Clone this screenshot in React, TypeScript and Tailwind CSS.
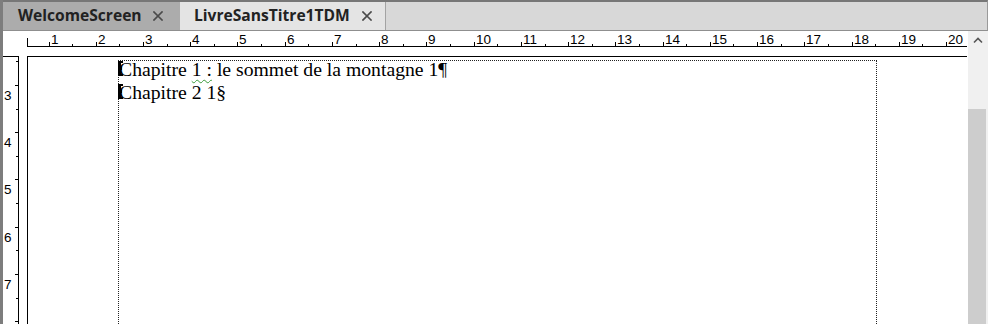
import React from "react";

const CM = 47.24;

function CloseX() {
  return (
    <svg width="10" height="10" viewBox="0 0 10 10" className="shrink-0">
      <path d="M1 1 L9 9 M9 1 L1 9" stroke="#4a4a4a" strokeWidth="1.7" strokeLinecap="square" />
    </svg>
  );
}

function HRuler() {
  const majors = Array.from({ length: 20 }, (_, i) => i + 1);
  return (
    <svg width="940" height="25" className="block">
      <line x1="0.5" y1="7" x2="0.5" y2="15.5" stroke="#000" strokeWidth="1" />
      <line x1="0" y1="15.5" x2="940" y2="15.5" stroke="#000" strokeWidth="1" />
      {majors.map((n) => {
        const x = Math.round(21.5 + CM * (n - 1)) + 0.5;
        const xm = Math.round(21.5 + CM * (n - 1) + CM / 2) + 0.5;
        return (
          <g key={n}>
            <line x1={x} y1="11" x2={x} y2="15" stroke="#000" strokeWidth="1" />
            {xm < 938 && <line x1={xm} y1="13" x2={xm} y2="15" stroke="#000" strokeWidth="1" />}
            <text
              x={x + 1.5}
              y="13"
              fontSize="13.5"
              fontFamily="'Liberation Sans', Arial, sans-serif"
              fill="#000"
            >
              {n}
            </text>
          </g>
        );
      })}
    </svg>
  );
}

function VRuler() {
  const majors = [3, 4, 5, 6, 7, 8];
  return (
    <svg width="16" height="268" className="block">
      <line x1="0" y1="0.5" x2="16" y2="0.5" stroke="#000" strokeWidth="1" />
      <line x1="15.5" y1="0" x2="15.5" y2="268" stroke="#000" strokeWidth="1" />
      <line x1="13" y1="5.5" x2="15" y2="5.5" stroke="#000" strokeWidth="1" />
      {majors.map((n, i) => {
        const y = Math.round(29 + CM * i) + 0.5;
        const ym = Math.round(29 + CM * i + CM / 2) + 0.5;
        return (
          <g key={n}>
            <line x1="12" y1={y} x2="15" y2={y} stroke="#000" strokeWidth="1" />
            <line x1="13" y1={ym} x2="15" y2={ym} stroke="#000" strokeWidth="1" />
            {n < 8 && (
              <text
                x="1"
                y={y + 14.5}
                fontSize="13.5"
                fontFamily="'Liberation Sans', Arial, sans-serif"
                fill="#000"
              >
                {n}
              </text>
            )}
          </g>
        );
      })}
    </svg>
  );
}

function Marker() {
  return (
    <svg width="5" height="15" viewBox="0 0 5 15" className="absolute -left-[1px] top-[3px]">
      <rect x="0" y="0" width="3" height="15" fill="#000" />
      <rect x="0" y="0" width="5" height="2" fill="#000" />
      <rect x="0" y="13" width="5" height="2" fill="#000" />
      <rect x="3" y="6" width="1" height="3" fill="#000" />
    </svg>
  );
}

export default function App() {
  return (
    <div className="w-[988px] h-[324px] overflow-hidden bg-white flex">
      <div className="w-[3px] h-full bg-[#7d7d7d] shrink-0" />
      <div className="flex-1 flex flex-col min-w-0">
        {/* Tab bar */}
        <div className="h-[31px] shrink-0 bg-[#d8d8d8] border-t-2 border-b border-r border-t-[#777777] border-b-[#8f8f8f] border-r-[#9a9a9a] flex items-stretch font-['Open_Sans',sans-serif]">
          <div className="w-[177px] bg-[#acacac] flex items-center pl-[15px] gap-[11px]">
            <span className="text-[15.6px] font-bold text-[#222]">WelcomeScreen</span>
            <CloseX />
          </div>
          <div className="w-[206px] bg-[#e4e4e4] border-r border-[#a3a3a3] flex items-center pl-[14px] gap-[12px]">
            <span className="text-[15.6px] font-bold text-[#222]">LivreSansTitre1TDM</span>
            <CloseX />
          </div>
        </div>
        {/* Body */}
        <div className="flex-1 flex min-h-0">
          <div className="flex-1 flex flex-col min-w-0">
            <div className="h-[25px] flex shrink-0">
              <div className="w-[24px] shrink-0" />
              <HRuler />
            </div>
            <div className="flex-1 flex min-h-0">
              <VRuler />
              <div className="w-[8px] shrink-0" />
              <div className="w-[940px] border-l border-t border-black pt-[3px] pl-[90px] overflow-hidden">
                <div className="w-[759px] h-[300px] border-l border-t border-r border-dotted border-[#222]">
                  <div className="-mt-[3px] font-['Liberation_Serif','Times_New_Roman',serif] text-[19.7px] leading-[23px] text-black">
                    <div className="relative">
                      <Marker />
                      Chapitre{" "}
                      <span className="underline decoration-wavy decoration-[#3a9a3a] decoration-1 underline-offset-[3px]">
                        1 :
                      </span>{" "}
                      le sommet de la montagne 1¶
                    </div>
                    <div className="relative">
                      <Marker />
                      Chapitre 2 1§
                    </div>
                  </div>
                </div>
              </div>
            </div>
          </div>
          {/* Scrollbar */}
          <div className="w-[20px] shrink-0 bg-[#f0f0f0] flex flex-col">
            <div className="h-[78px] flex justify-center pt-[6px]">
              <svg width="10" height="7" viewBox="0 0 10 7">
                <path d="M1 5.5 L5 1.5 L9 5.5" stroke="#555" strokeWidth="1.6" fill="none" />
              </svg>
            </div>
            <div className="flex-1 w-[18px] bg-[#cdcdcd]" />
          </div>
        </div>
      </div>
    </div>
  );
}
